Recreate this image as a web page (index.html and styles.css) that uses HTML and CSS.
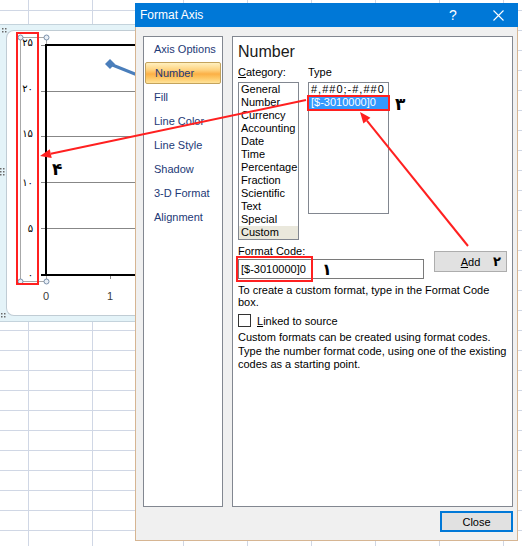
FILE: index.html
```html
<!DOCTYPE html>
<html>
<head>
<meta charset="utf-8">
<link rel="stylesheet" href="styles.css">
</head>
<body>
<div class="sheet">
  <div class="col c1"></div>
  <div class="col c2"></div>
  <div class="col c3"></div>
  <div class="col cn"></div>
  <div class="col cn"></div>
  <div class="col cn"></div>
  <div class="col cn"></div>
  <div class="col cn"></div>
</div>

<div class="chart">
  <div class="chart-inner"></div>
  <svg class="chart-svg" width="200" height="298" viewBox="0 24 200 298">
    <g fill="#6a6a6a">
      <rect x="2" y="28" width="1.5" height="1.5"/><rect x="5" y="28" width="1.5" height="1.5"/>
      <rect x="2" y="31" width="1.5" height="1.5"/><rect x="5" y="31" width="1.5" height="1.5"/>
      <rect x="0" y="168" width="1.5" height="1.5"/><rect x="3" y="168" width="1.5" height="1.5"/>
      <rect x="0" y="171" width="1.5" height="1.5"/><rect x="3" y="171" width="1.5" height="1.5"/>
      <rect x="0" y="174" width="1.5" height="1.5"/><rect x="3" y="174" width="1.5" height="1.5"/>
      <rect x="1" y="313" width="1.5" height="1.5"/><rect x="4" y="313" width="1.5" height="1.5"/>
      <rect x="1" y="316" width="1.5" height="1.5"/><rect x="4" y="316" width="1.5" height="1.5"/>
    </g>
    <rect x="20.5" y="37.5" width="26" height="244" fill="none" stroke="#a8a8a8" shape-rendering="crispEdges"/>
    <g stroke="#878787" stroke-width="1" shape-rendering="crispEdges">
      <line x1="41" y1="45.5" x2="46" y2="45.5"/>
      <line x1="41" y1="91.5" x2="200" y2="91.5"/>
      <line x1="41" y1="136.5" x2="200" y2="136.5"/>
      <line x1="41" y1="182.5" x2="200" y2="182.5"/>
      <line x1="41" y1="228.5" x2="200" y2="228.5"/>
      <line x1="110.5" y1="275" x2="110.5" y2="279"/>
    </g>
    <g stroke="#000" shape-rendering="crispEdges">
      <line x1="46" y1="45" x2="200" y2="45" stroke-width="2"/>
      <line x1="46" y1="44" x2="46" y2="276" stroke-width="2"/>
      <line x1="41" y1="275" x2="200" y2="275" stroke-width="2"/>
    </g>
    <g class="ylab" text-anchor="end">
      <text x="33" y="45.5">۲۵</text>
      <text x="33" y="91.5">۲۰</text>
      <text x="33" y="137">۱۵</text>
      <text x="33" y="185.5">۱۰</text>
      <text x="33" y="232">۵</text>
      <text x="33" y="277.5">۰</text>
    </g>
    <g class="xlab" text-anchor="middle">
      <text x="46" y="300">0</text>
      <text x="110" y="300">1</text>
    </g>
    <line x1="110" y1="64" x2="200" y2="100" stroke="#4a7ebb" stroke-width="3"/>
    <polygon points="110,59 115,64 110,69 105,64" fill="#4a7ebb"/>
    <g fill="#e9eff6" stroke="#7b90ab">
      <circle cx="20.5" cy="37.5" r="2.5"/>
      <circle cx="46.5" cy="37.5" r="2.5"/>
      <circle cx="20.5" cy="281.5" r="2.5"/>
      <circle cx="46.5" cy="281.5" r="2.5"/>
    </g>
  </svg>
</div>

<div class="dialog">
  <div class="titlebar">
    <span class="title">Format Axis</span>
    <span class="tb-btn help">?</span>
    <span class="tb-btn">
      <svg width="11" height="11" viewBox="0 0 11 11"><path d="M0.5 0.5 L10.5 10.5 M10.5 0.5 L0.5 10.5" stroke="#fff" stroke-width="1.1" fill="none"/></svg>
    </span>
  </div>
  <div class="dlg-body">
    <div class="panels">
      <ul class="nav">
        <li>Axis Options</li>
        <li class="active">Number</li>
        <li>Fill</li>
        <li>Line Color</li>
        <li>Line Style</li>
        <li>Shadow</li>
        <li>3-D Format</li>
        <li>Alignment</li>
      </ul>
      <div class="content">
        <h2 class="heading">Number</h2>
        <div class="lists">
          <div class="list-col">
            <div class="field-label"><u>C</u>ategory:</div>
            <div class="listbox cat">
              <div>General</div>
              <div>Number</div>
              <div>Currency</div>
              <div>Accounting</div>
              <div>Date</div>
              <div>Time</div>
              <div>Percentage</div>
              <div>Fraction</div>
              <div>Scientific</div>
              <div>Text</div>
              <div>Special</div>
              <div class="cat-sel">Custom</div>
            </div>
          </div>
          <div class="list-col">
            <div class="field-label">Type</div>
            <div class="listbox type">
              <div class="hash">#,##0;-#,##0</div>
              <div class="type-sel">[$-3010000]0</div>
            </div>
          </div>
        </div>
        <div class="code-row">
          <div class="code-col">
            <div class="field-label">Forma<u>t</u> Code:</div>
            <div class="input">[$-3010000]0</div>
          </div>
          <div class="btn btn-add"><u>A</u>dd</div>
        </div>
        <p class="hint">To create a custom format, type in the Format Code<br>box.</p>
        <div class="check-row">
          <span class="checkbox"></span>
          <span><u>L</u>inked to source</span>
        </div>
        <p class="note">Custom formats can be created using format codes.<br>Type the number format code, using one of the existing<br>codes as a starting point.</p>
      </div>
    </div>
    <div class="footer">
      <div class="btn btn-close">Close</div>
    </div>
  </div>
</div>

<svg class="annot" width="522" height="546" viewBox="0 0 522 546">
  <g fill="none" stroke="#ff2020" stroke-width="2">
    <rect x="17" y="33" width="21" height="251"/>
    <rect x="308" y="96" width="81" height="14"/>
    <rect x="237" y="257" width="75" height="24"/>
  </g>
  <g stroke="#ff2020" stroke-width="2">
    <line x1="306" y1="100" x2="50.8" y2="153.7"/>
    <line x1="468" y1="246" x2="366.9" y2="120.6"/>
  </g>
  <g fill="#ff2020">
    <polygon points="40,156 51.7,158.1 49.8,149.3"/>
    <polygon points="360,112 370.4,117.7 363.4,123.4"/>
  </g>
  <g class="mark">
    <text x="52" y="175" font-size="17">۴</text>
    <text x="395" y="110" font-size="17">۳</text>
    <text x="493" y="266" font-size="13">۲</text>
    <text x="322" y="275" font-size="16">۱</text>
  </g>
</svg>
</body>
</html>
```

FILE: styles.css
```css
* { box-sizing: border-box; }

html, body {
  margin: 0;
  padding: 0;
}

body {
  width: 522px;
  height: 546px;
  overflow: hidden;
  position: relative;
  background: #fff;
  font-family: "Liberation Sans", Arial, sans-serif;
  font-size: 11px;
  color: #000;
}

/* spreadsheet background */
.sheet {
  display: flex;
  height: 546px;
  background-image: repeating-linear-gradient(to bottom, transparent 0 10px, #d0d7e5 10px 11px, transparent 11px 20px);
}
.col { flex: none; height: 100%; border-right: 1px solid #d0d7e5; }
.c1 { width: 29px; }
.c2 { width: 64px; }
.c3 { width: 91px; }
.cn { width: 64px; }

/* chart object */
.chart {
  position: absolute;
  left: 0;
  top: 24px;
  width: 200px;
  height: 298px;
  background: #e4f3f8;
  border-top: 1px solid #c4d3dc;
  border-bottom: 1px solid #c4d3dc;
  padding: 5px 0 5px 6px;
}
.chart-inner {
  height: 100%;
  background: #fff;
  border: 1px solid #c0ccd4;
  border-right: none;
  border-radius: 8px 0 0 8px;
}
.chart-svg {
  position: absolute;
  left: 0;
  top: -1px;
}
.ylab text {
  font-family: "DejaVu Sans", sans-serif;
  font-size: 10px;
  fill: #000;
}
.xlab text {
  font-family: "Liberation Sans", Arial, sans-serif;
  font-size: 11px;
  fill: #3a3a3a;
}

/* dialog window */
.dialog {
  position: absolute;
  left: 135px;
  top: 3px;
  width: 383px;
  height: 538px;
  background: #f0f0f0;
  border: 1px solid #d6b592;
  border-top: none;
  display: flex;
  flex-direction: column;
}
.titlebar {
  height: 24px;
  margin: 0 -1px;
  background: #0078d7;
  color: #fff;
  display: flex;
  align-items: center;
}
.title {
  flex: 1;
  padding-left: 5px;
  font-size: 12px;
}
.tb-btn {
  width: 40px;
  height: 24px;
  display: flex;
  align-items: center;
  justify-content: center;
}
.help {
  margin-right: 5px;
  font-size: 14px;
}

.dlg-body {
  flex: 1;
  padding: 9px 4px 0 7px;
  display: flex;
  flex-direction: column;
}
.panels {
  display: flex;
  gap: 9px;
  height: 471px;
}

.nav {
  width: 80px;
  margin: 0;
  padding: 0;
  list-style: none;
  background: #fff;
  border: 1px solid #828790;
}
.nav li {
  height: 24px;
  line-height: 24px;
  padding-left: 10px;
  color: #1d3976;
  white-space: nowrap;
}
.nav li.active {
  height: 22px;
  line-height: 20px;
  margin: 1px 1px 1px 1px;
  padding-left: 9px;
  border: 1px solid #c4a35c;
  border-radius: 2px;
  background: linear-gradient(to bottom, #fff0bf 0%, #fed27e 35%, #fbb046 55%, #fdc764 75%, #ffe39a 100%);
}

.content {
  width: 281px;
  background: #fff;
  border: 1px solid #828790;
  padding-left: 5px;
}
.heading {
  margin: 5px 0 0;
  font-size: 16px;
  line-height: 20px;
  font-weight: normal;
  color: #1a1a1a;
}
.lists {
  display: flex;
  gap: 9px;
  margin-top: 4px;
}
.field-label {
  line-height: 13px;
  white-space: nowrap;
}
.listbox {
  margin-top: 3px;
  background: #fff;
  border: 1px solid #828790;
}
.listbox div {
  line-height: 13px;
  padding-left: 2px;
  white-space: nowrap;
}
.cat { width: 61px; height: 158px; }
.type { width: 81px; height: 132px; }
.cat-sel { background: #eae8dc; }
.type-sel { background: #3399ff; color: #fff; }
.hash { letter-spacing: 1px; }

.code-row {
  display: flex;
  margin-top: 5px;
}
.code-col {
  display: flex;
  flex-direction: column;
}
.input {
  width: 186px;
  height: 20px;
  margin-top: 1px;
  padding-left: 2px;
  line-height: 18px;
  background: #fff;
  border: 1px solid #7a7a7a;
}
.btn {
  display: flex;
  align-items: center;
  justify-content: center;
  background: #e1e1e1;
}
.btn-add {
  width: 73px;
  height: 21px;
  margin: 6px 0 0 10px;
  border: 1px solid #adadad;
}
.hint {
  margin: 5px 0 0;
  line-height: 12px;
}
.check-row {
  display: flex;
  align-items: center;
  gap: 6px;
  margin-top: 6px;
  height: 13px;
}
.checkbox {
  width: 13px;
  height: 13px;
  background: #fff;
  border: 1px solid #333;
}
.note {
  margin: 4px 0 0;
  line-height: 13.5px;
}

.footer {
  display: flex;
  justify-content: flex-end;
  padding-top: 4px;
}
.btn-close {
  width: 73px;
  height: 21px;
  border: 2px solid #0078d7;
}

/* annotations */
.annot {
  position: absolute;
  left: 0;
  top: 0;
  pointer-events: none;
}
.mark text {
  font-family: "DejaVu Sans", sans-serif;
  font-weight: bold;
  fill: #000;
}
```
